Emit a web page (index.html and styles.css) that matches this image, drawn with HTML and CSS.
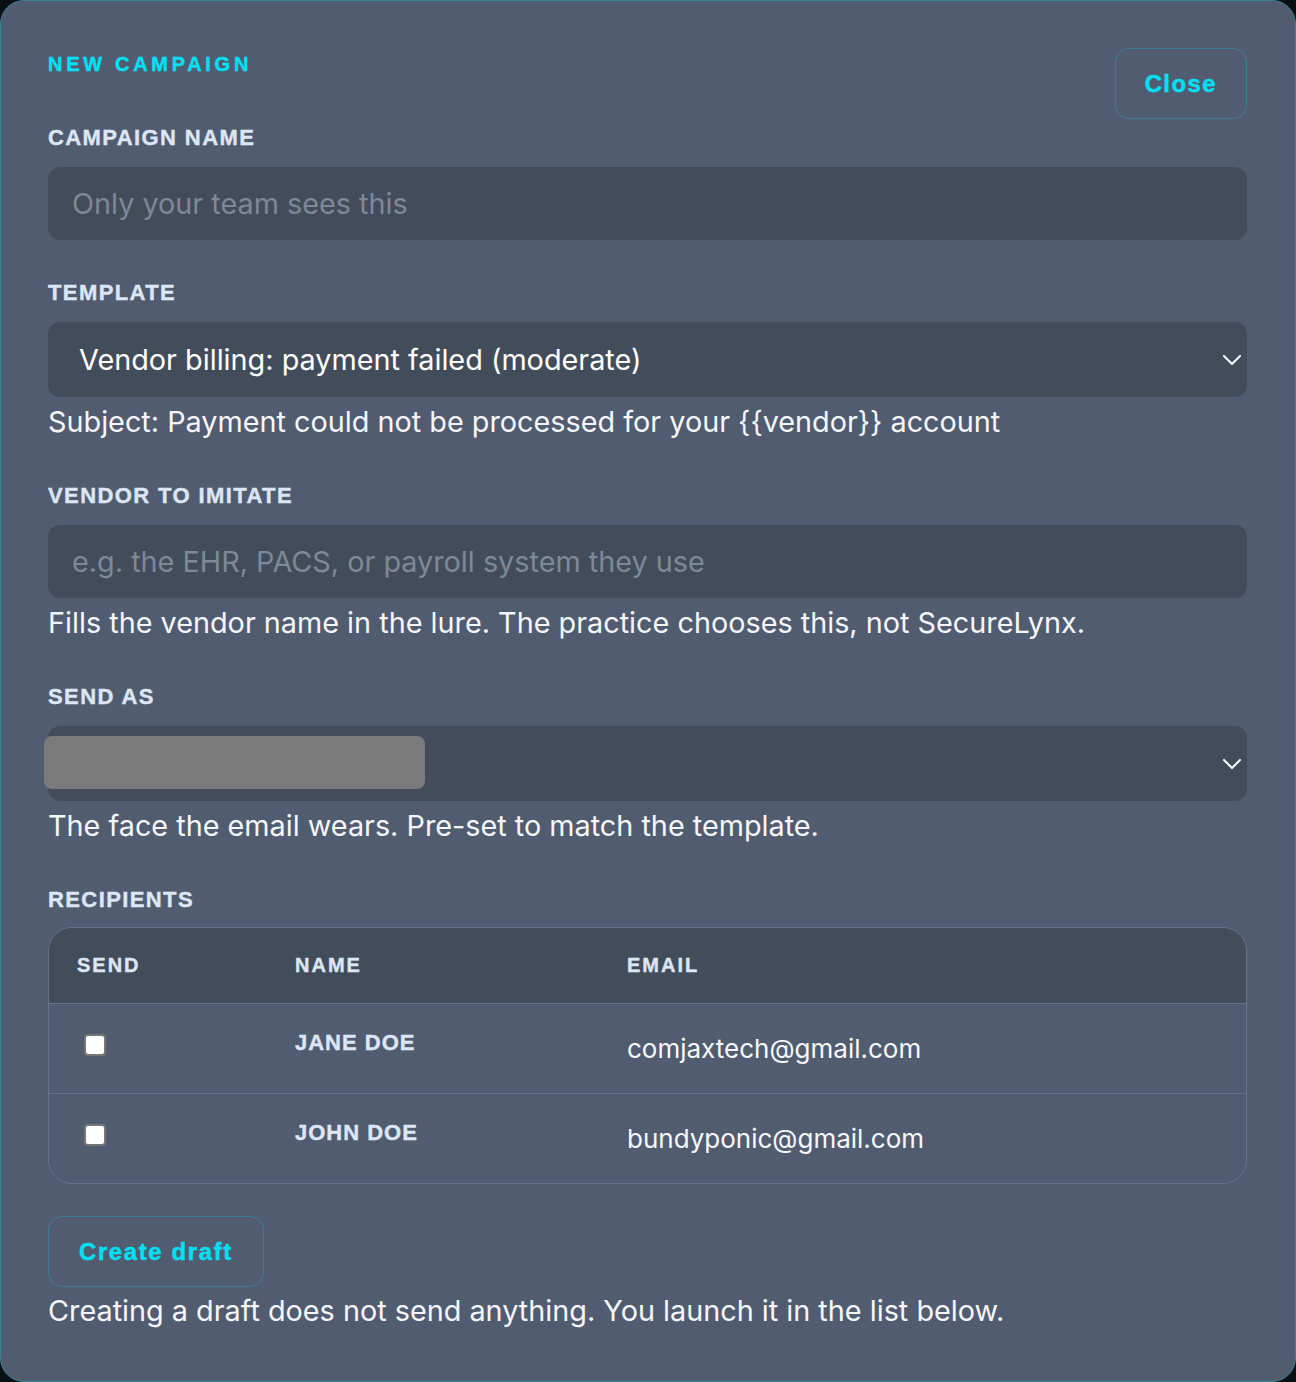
FILE: index.html
```html
<!DOCTYPE html>
<html lang="en">
<head>
    <meta charset="UTF-8">
    <meta name="viewport" content="width=device-width, initial-scale=1.0">
    <title>New Campaign</title>
    <link rel="stylesheet" href="styles.css">
</head>
<body>
    <div class="modal">
        <div class="modal-head">
            <h2 class="eyebrow">NEW CAMPAIGN</h2>
            <button class="ghost-btn">Close</button>
        </div>

        <div class="field first">
            <label class="field-label" for="campaignName">CAMPAIGN NAME</label>
            <input type="text" class="text-input" id="campaignName" placeholder="Only your team sees this">
        </div>

        <div class="field">
            <label class="field-label" for="template">TEMPLATE</label>
            <div class="select-wrap">
                <select class="select-input" id="template">
                    <option>Vendor billing: payment failed (moderate)</option>
                </select>
                <svg class="chevron" viewBox="0 0 18 10" width="18" height="10"><path d="M1 1l8 8 8-8" fill="none" stroke="#fff" stroke-width="2" stroke-linecap="round" stroke-linejoin="round"/></svg>
            </div>
            <p class="help">Subject: Payment could not be processed for your {{vendor}} account</p>
        </div>

        <div class="field">
            <label class="field-label" for="vendor">VENDOR TO IMITATE</label>
            <input type="text" class="text-input" id="vendor" placeholder="e.g. the EHR, PACS, or payroll system they use">
            <p class="help">Fills the vendor name in the lure. The practice chooses this, not SecureLynx.</p>
        </div>

        <div class="field">
            <label class="field-label" for="sendAs">SEND AS</label>
            <div class="select-wrap">
                <select class="select-input" id="sendAs">
                    <option>Billing desk</option>
                </select>
                <svg class="chevron" viewBox="0 0 18 10" width="18" height="10"><path d="M1 1l8 8 8-8" fill="none" stroke="#fff" stroke-width="2" stroke-linecap="round" stroke-linejoin="round"/></svg>
                <div class="redact"></div>
            </div>
            <p class="help">The face the email wears. Pre-set to match the template.</p>
        </div>

        <div class="field">
            <span class="field-label table-label">RECIPIENTS</span>
            <div class="recipients">
                <div class="rec-row rec-head">
                    <div class="cell">SEND</div>
                    <div class="cell">NAME</div>
                    <div class="cell">EMAIL</div>
                </div>
                <div class="rec-row">
                    <div class="cell"><input type="checkbox" class="check"></div>
                    <div class="cell rec-name">JANE DOE</div>
                    <div class="cell rec-email">comjaxtech@gmail.com</div>
                </div>
                <div class="rec-row">
                    <div class="cell"><input type="checkbox" class="check"></div>
                    <div class="cell rec-name">JOHN DOE</div>
                    <div class="cell rec-email">bundyponic@gmail.com</div>
                </div>
            </div>
        </div>

        <div class="actions">
            <button class="ghost-btn wide">Create draft</button>
            <p class="help">Creating a draft does not send anything. You launch it in the list below.</p>
        </div>
    </div>
</body>
</html>
```

FILE: styles.css
```css
* {
    box-sizing: border-box;
}

body {
    margin: 0;
    background: #0a0f14;
    font-family: Inter, "Noto Sans", sans-serif;
}

.modal {
    min-height: 100vh;
    background: #525c70;
    border: 1px solid #3a8395;
    border-radius: 24px;
    padding: 47px 48px 40px 47px;
    color: #f4f6fa;
}

.modal-head {
    display: flex;
    justify-content: space-between;
    align-items: flex-start;
}

.eyebrow {
    margin: 4px 0 0;
    font: 700 20px/24px "Liberation Sans", Arial, sans-serif;
    letter-spacing: 3.7px;
    color: #00e1f7;
    -webkit-text-stroke: 0.4px currentColor;
}

.ghost-btn {
    height: 71px;
    padding: 0 29px;
    background: transparent;
    border: 1px solid rgba(0, 200, 230, 0.3);
    border-radius: 14px;
    color: #00e1f7;
    font: 700 24px "Liberation Sans", Arial, sans-serif;
    letter-spacing: 1.4px;
    -webkit-text-stroke: 0.4px currentColor;
    cursor: pointer;
}

.ghost-btn.wide {
    padding: 0 30px;
    letter-spacing: 1.6px;
}

.field {
    margin-top: 41px;
}

.field.first {
    margin-top: 7px;
}

.field-label {
    display: block;
    margin-bottom: 17px;
    font: 700 22px/24px "Liberation Sans", Arial, sans-serif;
    letter-spacing: 1.4px;
    color: #dce6f4;
    -webkit-text-stroke: 0.4px currentColor;
}

.table-label {
    margin-bottom: 15px;
}

.text-input {
    display: block;
    width: 100%;
    height: 73px;
    padding: 0 24px;
    border: none;
    border-radius: 12px;
    background: #434c5b;
    color: #fff;
    font: 400 28.8px Inter, sans-serif;
    outline: none;
}

.text-input::placeholder {
    color: #7d8898;
}

.select-wrap {
    position: relative;
}

.select-input {
    display: block;
    width: 100%;
    height: 75px;
    padding: 0 31px;
    border: none;
    border-radius: 12px;
    background: #434c5b;
    color: #fff;
    font: 400 28.8px Inter, sans-serif;
    appearance: none;
    -webkit-appearance: none;
    outline: none;
}

.chevron {
    position: absolute;
    right: 6px;
    top: 50%;
    transform: translateY(-50%);
    pointer-events: none;
}

/* masked sender identity */
.redact {
    position: absolute;
    left: -4px;
    top: 10px;
    width: 381px;
    height: 53px;
    background: #7a7a7a;
    border-radius: 8px;
    filter: blur(0.6px);
}

.help {
    margin: 4px 0 0;
    font: 400 28.8px/42px Inter, sans-serif;
    color: #f4f6fa;
}

.recipients {
    border: 1px solid #66718a;
    border-radius: 24px;
    overflow: hidden;
}

.rec-row {
    display: grid;
    grid-template-columns: 218px 332px 1fr;
    align-items: center;
    height: 90px;
    border-top: 1px solid #66718a;
}

.rec-head {
    height: 75px;
    border-top: none;
    background: #434c5b;
    font: 700 20px "Liberation Sans", Arial, sans-serif;
    letter-spacing: 2px;
    color: #dce6f4;
    -webkit-text-stroke: 0.4px currentColor;
}

.cell {
    padding-left: 28px;
}

.check {
    display: block;
    width: 22px;
    height: 22px;
    margin: 0 0 8px 7px;
    background: #fff;
    border: 2px solid #767676;
    border-radius: 4px;
    appearance: none;
    -webkit-appearance: none;
}

.rec-name {
    margin-bottom: 12px;
    font: 700 22px "Liberation Sans", Arial, sans-serif;
    letter-spacing: 1px;
    color: #dce6f4;
    -webkit-text-stroke: 0.4px currentColor;
}

.rec-email {
    font: 400 26px Inter, sans-serif;
    color: #f6f8fb;
}

.actions {
    margin-top: 32px;
}

.actions .help {
    margin-top: 3px;
}
```
